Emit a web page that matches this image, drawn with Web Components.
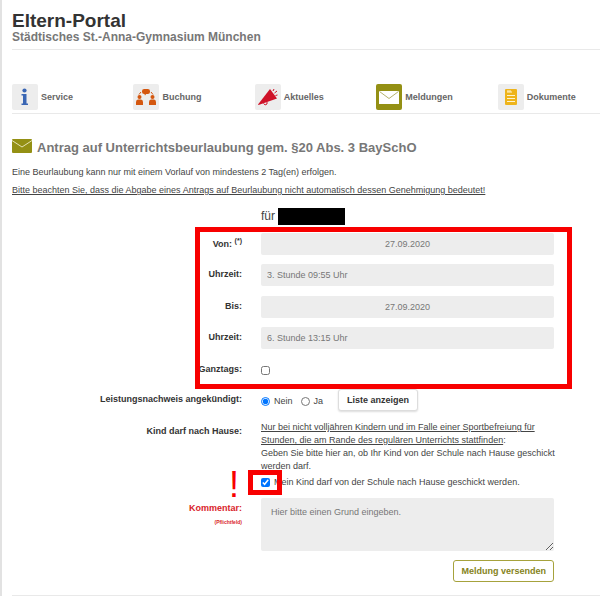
<!DOCTYPE html>
<html lang="de">
<head>
<meta charset="utf-8">
<meta name="viewport" content="width=device-width, initial-scale=1">
<title>Eltern-Portal</title>
<style>
    body {
        margin: 0;
        font: 9px/13px "Liberation Sans", Arial, sans-serif;
        color: #444;
        background: #fff;
        --olive: #949014;
        --line: #e9e9e9;
        --field: #ededed;
        --mark: #f80000;
    }
</style>
</head>
<body>
<parent-portal>
    <portal-header slot="header">
        Eltern-Portal
        <span slot="school">Städtisches St.-Anna-Gymnasium München</span>
    </portal-header>
    <portal-nav slot="nav"></portal-nav>
    <page-title>Antrag auf Unterrichtsbeurlaubung gem. §20 Abs. 3 BaySchO</page-title>
    <leave-form></leave-form>
</parent-portal>

<script>
class ParentPortal extends HTMLElement {
    constructor() {
        super();
        this.attachShadow({mode: 'open'}).innerHTML = `
            <style>
                :host {
                    display: block;
                    border-left: 2px solid #e2e2e2;
                    padding-left: 10px;
                    overflow: hidden;
                }
                main {
                    padding-top: 24px;
                }
            </style>
            <slot name="header"></slot>
            <slot name="nav"></slot>
            <main><slot></slot></main>
        `;
    }
}

class PortalHeader extends HTMLElement {
    constructor() {
        super();
        this.attachShadow({mode: 'open'}).innerHTML = `
            <style>
                :host {
                    display: block;
                    padding: 11px 0 5px;
                    border-bottom: 1px solid var(--line);
                }
                h1, p {
                    margin: 0;
                    font-weight: bold;
                }
                h1 {
                    font-size: 19px;
                    line-height: 20px;
                    color: #333;
                }
                p {
                    font-size: 12px;
                    line-height: 13px;
                    color: #777;
                }
            </style>
            <header>
                <h1><slot></slot></h1>
                <p><slot name="school"></slot></p>
            </header>
        `;
    }
}

const icons = {
    info: `<g fill="#3a66b4">
        <circle cx="12.500" cy="6.500" r="2.100"/>
        <path d="M9.500 10h5v9.500h1.500v1.500h-6.500v-1.500h1.500v-8h-1.500z"/></g>`,
    booking: `<g fill="#d4570f">
        <rect x="9" y="5" width="8" height="5" rx="2.200"/>
        <path d="M11 9h3l-2 2.500z"/>
        <circle cx="6.500" cy="13" r="2"/><circle cx="19.500" cy="13" r="2"/>
        <path d="M3 21v-3q0-2.500 2-2.500h3q2 0 2 2.500v3z"/>
        <path d="M16 21v-3q0-2.500 2-2.500h3q2 0 2 2.500v3z"/>
        <path d="M6 10.500l2-2.500M18 8l2 2.500" stroke="#d4570f"/></g>`,
    news: `<path d="M3 20.500L15 5l7 9.500L3.500 21z" fill="#cf1228"/>
        <path d="M8.500 19.500q1.500 2.500 3.500.5v-2M18 7l1-2M19.500 9l2.500-2M20.500 11.500l2-.5" fill="none" stroke="#cf1228"/>`,
    mail: `<rect x="3" y="7" width="20" height="13" fill="#fff"/>
        <path d="M3.500 7.500l9.500 7 9.500-7" fill="none" stroke="#b5b26c"/>`,
    docs: `<rect x="7" y="5" width="12" height="16" rx="1" fill="#eeb41b"/>
        <path d="M9 8h5M9 11.500h8M9 14.500h8M9 17.500h8" stroke="#fff3cf" stroke-width="1"/>
        <path d="M9 7h4" stroke="#fff3cf"/>`
};

class PortalNavItem extends HTMLElement {
    constructor() {
        super();
        this.attachShadow({mode: 'open'});
    }

    connectedCallback() {
        this.shadowRoot.innerHTML = `
            <style>
                :host {
                    display: block;
                }
                a {
                    display: flex;
                    align-items: center;
                    gap: 3px;
                    color: #666;
                    font-weight: bold;
                    text-decoration: none;
                }
                svg {
                    width: 26px;
                    height: 26px;
                    border-radius: 2px;
                    background: var(--field);
                }
                :host([active]) svg {
                    background: var(--olive);
                }
            </style>
            <a href="#"><svg viewBox="0 0 26 26" aria-hidden="true">${icons[this.getAttribute('icon')]}</svg><slot></slot></a>
        `;
    }
}

class PortalNav extends HTMLElement {
    constructor() {
        super();
        this.attachShadow({mode: 'open'}).innerHTML = `
            <style>
                :host {
                    display: block;
                    padding: 34px 0 3px;
                    border-bottom: 1px solid var(--line);
                }
                nav {
                    display: grid;
                    grid-template-columns: repeat(4, 19fr) 16fr;
                }
            </style>
            <nav>
                <portal-nav-item icon="info">Service</portal-nav-item>
                <portal-nav-item icon="booking">Buchung</portal-nav-item>
                <portal-nav-item icon="news">Aktuelles</portal-nav-item>
                <portal-nav-item icon="mail" active>Meldungen</portal-nav-item>
                <portal-nav-item icon="docs">Dokumente</portal-nav-item>
            </nav>
        `;
    }
}

class PageTitle extends HTMLElement {
    constructor() {
        super();
        this.attachShadow({mode: 'open'}).innerHTML = `
            <style>
                :host {
                    display: flex;
                    gap: 5px;
                    color: #777;
                }
                svg {
                    width: 20px;
                    height: 14px;
                    margin-top: 1px;
                }
                h2 {
                    margin: 0;
                    font-size: 13px;
                    line-height: 19px;
                }
            </style>
            <svg viewBox="0 0 20 14" aria-hidden="true">
                <rect width="20" height="14" rx="1" fill="#949014"/>
                <path d="M0 1.500l10 6.500 10-6.500" fill="none" stroke="#e4e2b4"/>
            </svg>
            <h2><slot></slot></h2>
        `;
    }
}

// one line of the form: label on the left, control on the right
class FormRow extends HTMLElement {
    constructor() {
        super();
        this.attachShadow({mode: 'open'}).innerHTML = `
            <style>
                :host {
                    display: grid;
                    grid-template-columns: 230fr 293fr;
                    column-gap: 19px;
                }
                .label {
                    padding-top: 4px;
                    text-align: right;
                    font-weight: bold;
                    color: #333;
                }
                .field {
                    min-width: 0;
                }
            </style>
            <div class="label"><slot name="label"></slot></div>
            <div class="field"><slot></slot></div>
        `;
    }
}

// red frame drawn over whatever is slotted
class MarkedArea extends HTMLElement {
    constructor() {
        super();
        this.attachShadow({mode: 'open'}).innerHTML = `
            <style>
                :host {
                    display: block;
                    position: relative;
                }
                .frame {
                    position: absolute;
                    inset: var(--frame-inset);
                    border: 5px solid var(--mark);
                    pointer-events: none;
                }
            </style>
            <slot></slot>
            <div class="frame"></div>
        `;
    }
}

class LeaveForm extends HTMLElement {
    constructor() {
        super();
        this.attachShadow({mode: 'open'}).innerHTML = `
            <style>
                :host {
                    display: block;
                }
                p {
                    margin: 0 0 5px;
                }
                .intro {
                    padding-top: 9px;
                }
                form {
                    padding: 6px 46px 13px 0;
                    border-bottom: 1px solid var(--line);
                }
                input, select, textarea, button {
                    box-sizing: border-box;
                    margin: 0;
                    font: inherit;
                }
                .child {
                    display: flex;
                    align-items: center;
                    gap: 3px;
                    margin-bottom: 8px;
                    font-size: 12px;
                    line-height: 17px;
                }
                .redacted {
                    width: 67px;
                    height: 17px;
                    background: #000;
                }
                .period {
                    --frame-inset: -6px -18px -8px 183px;
                }
                .day {
                    display: grid;
                    gap: 9px;
                    margin-bottom: 10px;
                }
                .text {
                    display: block;
                    width: 100%;
                    height: 22px;
                    padding: 0 6px;
                    border: 0;
                    border-radius: 2px;
                    background: var(--field);
                    color: #777;
                    appearance: none;
                }
                .date {
                    text-align: center;
                }
                sup {
                    font-size: 7px;
                    line-height: 7px;
                }
                [type=checkbox], [type=radio] {
                    width: 9px;
                    height: 9px;
                    flex: none;
                }
                .line {
                    display: flex;
                    align-items: center;
                    height: 22px;
                }
                .exam {
                    margin-top: 8px;
                }
                .exam .line {
                    align-items: end;
                    gap: 8px;
                }
                .option {
                    display: flex;
                    align-items: center;
                    gap: 4px;
                    height: 20px;
                }
                button {
                    height: 22px;
                    border: 1px solid #ddd;
                    border-radius: 3px;
                    padding: 0 8px;
                    background: #fff;
                    color: #333;
                    font-weight: bold;
                }
                .list {
                    margin-left: 7px;
                    box-shadow: 0 1px 2px #ddd;
                }
                .home {
                    margin-top: 10px;
                }
                .note {
                    margin-right: -8px;
                }
                .consent {
                    display: flex;
                    align-items: center;
                    height: 18px;
                    gap: 4px;
                }
                .tick {
                    --frame-inset: -8px -12px -8px -13px;
                }
                .tick input {
                    display: block;
                }
                .comment {
                    position: relative;
                    margin-top: 7px;
                }
                .required {
                    color: #d9232a;
                }
                .required small {
                    display: block;
                    font-size: 5px;
                    line-height: 14px;
                }
                .alert {
                    position: absolute;
                    left: 217px;
                    bottom: 100%;
                    font-size: 36px;
                    line-height: 26px;
                    color: var(--mark);
                }
                textarea {
                    display: block;
                    width: 100%;
                    height: 53px;
                    padding: 8px 10px;
                    border: 0;
                    border-radius: 2px;
                    background: var(--field);
                }
                textarea::placeholder {
                    color: #777;
                }
                .actions {
                    display: flex;
                    justify-content: end;
                    margin-top: 9px;
                }
                .send {
                    padding: 0 7px;
                    border-color: #a6a23c;
                    color: #85821a;
                }
            </style>
            <p class="intro">Eine Beurlaubung kann nur mit einem Vorlauf von mindestens 2 Tag(en) erfolgen.</p>
            <p><u>Bitte beachten Sie, dass die Abgabe eines Antrags auf Beurlaubung nicht automatisch dessen Genehmigung bedeutet!</u></p>
            <form>
                <form-row>
                    <div class="child">für <span class="redacted"></span></div>
                </form-row>
                <marked-area class="period">
                    <div class="day">
                        <form-row>
                            <label slot="label" for="from">Von: <sup>(*)</sup></label>
                            <input class="text date" id="from" value="27.09.2020">
                        </form-row>
                        <form-row>
                            <label slot="label" for="from-hour">Uhrzeit:</label>
                            <select class="text" id="from-hour"><option>3. Stunde 09:55 Uhr</option></select>
                        </form-row>
                    </div>
                    <div class="day">
                        <form-row>
                            <label slot="label" for="to">Bis:</label>
                            <input class="text date" id="to" value="27.09.2020">
                        </form-row>
                        <form-row>
                            <label slot="label" for="to-hour">Uhrzeit:</label>
                            <select class="text" id="to-hour"><option>6. Stunde 13:15 Uhr</option></select>
                        </form-row>
                    </div>
                    <form-row>
                        <label slot="label" for="all-day">Ganztags:</label>
                        <div class="line"><input type="checkbox" id="all-day"></div>
                    </form-row>
                </marked-area>
                <form-row class="exam">
                    <span slot="label">Leistungsnachweis angekündigt:</span>
                    <div class="line">
                        <label class="option"><input type="radio" name="exam" checked>Nein</label>
                        <label class="option"><input type="radio" name="exam">Ja</label>
                        <button type="button" class="list">Liste anzeigen</button>
                    </div>
                </form-row>
                <form-row class="home">
                    <span slot="label">Kind darf nach Hause:</span>
                    <div class="note">
                        <u>Nur bei nicht volljähren Kindern und im Falle einer Sportbefreiung für<br>
                        Stunden, die am Rande des regulären Unterrichts stattfinden</u>:<br>
                        Geben Sie bitte hier an, ob Ihr Kind von der Schule nach Hause geschickt werden darf.
                    </div>
                    <div class="consent">
                        <marked-area class="tick"><input type="checkbox" id="consent" checked></marked-area>
                        <label for="consent">Mein Kind darf von der Schule nach Hause geschickt werden.</label>
                    </div>
                </form-row>
                <div class="comment">
                    <form-row>
                        <label slot="label" for="comment" class="required">Kommentar:<small>(Pflichtfeld)</small></label>
                        <textarea id="comment" placeholder="Hier bitte einen Grund eingeben."></textarea>
                    </form-row>
                    <span class="alert">!</span>
                </div>
                <div class="actions"><button class="send">Meldung versenden</button></div>
            </form>
        `;
    }
}

customElements.define('parent-portal', ParentPortal);
customElements.define('portal-header', PortalHeader);
customElements.define('portal-nav-item', PortalNavItem);
customElements.define('portal-nav', PortalNav);
customElements.define('page-title', PageTitle);
customElements.define('form-row', FormRow);
customElements.define('marked-area', MarkedArea);
customElements.define('leave-form', LeaveForm);
</script>
</body>
</html>
